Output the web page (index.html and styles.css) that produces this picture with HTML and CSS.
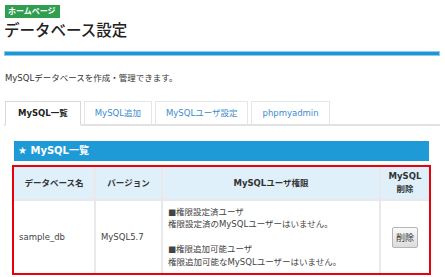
FILE: index.html
```html
<!DOCTYPE html>
<html lang="ja">
<head>
  <meta charset="UTF-8">
  <title>データベース設定</title>
  <link rel="stylesheet" href="styles.css">
</head>
<body>
  <div class="page-head">
    <span class="home-badge">ホームページ</span>
    <h1 class="page-title">データベース設定</h1>
    <div class="title-bar"></div>
  </div>

  <p class="lead">MySQLデータベースを作成・管理できます。</p>

  <ul class="tabs">
    <li class="tab active">MySQL一覧</li>
    <li class="tab">MySQL追加</li>
    <li class="tab">MySQLユーザ設定</li>
    <li class="tab">phpmyadmin</li>
  </ul>

  <div class="section">
    <h2 class="section-title">★ MySQL一覧</h2>
    <div class="highlight">
      <table class="db-table">
        <tr>
          <th class="col-name">データベース名</th>
          <th class="col-ver">バージョン</th>
          <th class="col-perm">MySQLユーザ権限</th>
          <th class="col-del">MySQL<br>削除</th>
        </tr>
        <tr>
          <td>sample_db</td>
          <td>MySQL5.7</td>
          <td class="perm">
            ■権限設定済ユーザ<br>
            権限設定済のMySQLユーザーはいません。<br>
            <br>
            ■権限追加可能ユーザ<br>
            権限追加可能なMySQLユーザーはいません。
          </td>
          <td class="del"><button class="del-btn">削除</button></td>
        </tr>
      </table>
    </div>
  </div>
</body>
</html>
```

FILE: styles.css
```css
body {
  margin: 0;
  padding: 5px 5px 0 4px;
  font-family: "DejaVu Sans", "Noto Sans CJK JP", sans-serif;
  font-size: 8.5px;
  color: #333;
  background: #fff;
}
.page-head {
  margin-bottom: 16px;
}
.home-badge {
  display: inline-block;
  background: #2f9e4f;
  color: #fff;
  font-weight: bold;
  font-size: 8px;
  line-height: 13px;
  padding: 0 4px 0 3px;
  margin-left: 1px;
}
.page-title {
  margin: 2px 0 0;
  font-size: 15.5px;
  font-weight: 500;
  color: #222;
  line-height: 22px;
}
.title-bar {
  margin-top: 9px;
  height: 3px;
  background: #1b97d8;
  border: 1px solid #8ccbee;
}
.lead {
  margin: 0 0 0 1px;
  line-height: 12px;
}
.tabs {
  list-style: none;
  margin: 17px 0 0;
  padding: 0 0 0 1px;
  display: flex;
  gap: 3px;
  border-bottom: 2px solid #e2e2e2;
}
.tab {
  height: 22px;
  line-height: 22px;
  margin-bottom: -2px;
  padding: 0 10px;
  border: 1px solid #e6e6e6;
  border-bottom: 2px solid #e2e2e2;
  color: #3d8ccb;
  font-size: 8.5px;
  background: #fff;
}
.tab.active {
  color: #222;
  font-weight: bold;
  border-color: #d8d8d8;
  border-bottom-color: #fff;
  padding: 0 12px;
}
.section {
  margin: 15px 9px 0 8px;
}
.section-title {
  margin: 0 2px;
  background: #1e9ad7;
  color: #fff;
  font-size: 10px;
  line-height: 20px;
  padding: 0 4px;
}
.highlight {
  margin-top: 4px;
  border: 2px solid #e8000b;
}
.db-table {
  width: 100%;
  border-collapse: collapse;
}
.db-table th,
.db-table td {
  border: 2px solid #e9e9e9;
  padding: 0 5px;
}
.db-table tr:first-child th {
  border-top: none;
}
.db-table th:first-child,
.db-table td:first-child {
  border-left: none;
}
.db-table th:last-child,
.db-table td:last-child {
  border-right: none;
}
.db-table tr:last-child td {
  border-bottom: none;
}
.db-table th {
  background: #dff0fa;
  height: 32px;
  font-size: 8.5px;
  line-height: 13px;
  color: #333;
}
.col-name { width: 70px; }
.col-ver { width: 55px; }
.col-del { width: 38px; }
.db-table td {
  height: 72px;
  color: #444;
}
.db-table td.perm {
  line-height: 12.5px;
}
.db-table td.del {
  text-align: center;
}
.del-btn {
  font-family: "DejaVu Sans", "Noto Sans CJK JP", sans-serif;
  font-size: 9px;
  color: #333;
  padding: 3px 3px;
  border: 1px solid #b5b5b5;
  border-radius: 2px;
  background: linear-gradient(#fafafa, #dcdcdc);
}
```
